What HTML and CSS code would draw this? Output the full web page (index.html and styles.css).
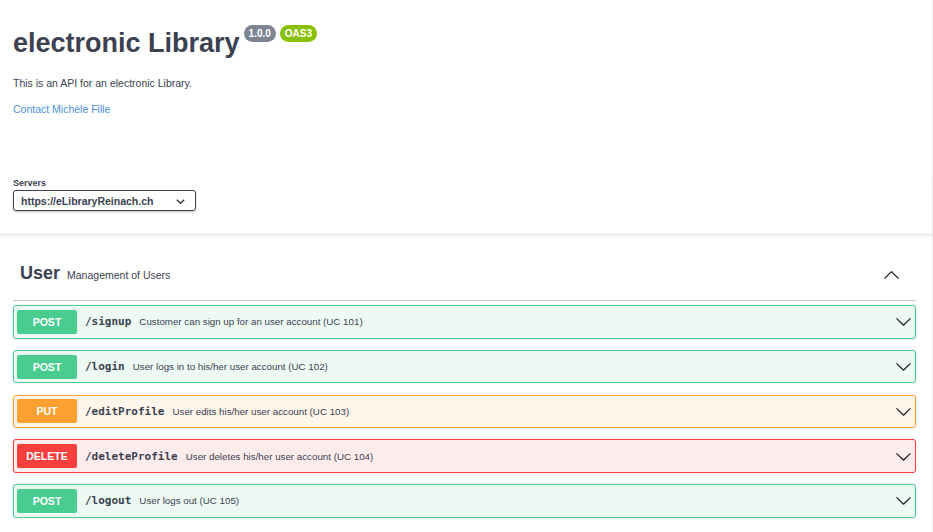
FILE: index.html
```html
<!DOCTYPE html>
<html lang="en">
<head>
<meta charset="utf-8">
<title>electronic Library</title>
<link rel="stylesheet" href="styles.css">
</head>
<body>
<div class="page">
  <div class="wrapper info">
    <h2 class="title">electronic Library<span class="badges"><span class="badge version">1.0.0</span><span class="badge oas">OAS3</span></span></h2>
    <p class="desc">This is an API for an electronic Library.</p>
    <a class="contact" href="#">Contact Michèle Fille</a>
  </div>
  <div class="scheme">
    <div class="wrapper">
      <div class="servers-label">Servers</div>
      <div class="select">
        <span>https://eLibraryReinach.ch</span>
        <svg class="sel-arrow" viewBox="0 0 9 5" width="9" height="5"><polyline points="0.8,0.8 4.5,4.2 8.2,0.8" fill="none" stroke="#333" stroke-width="1.4"/></svg>
      </div>
    </div>
  </div>
  <div class="wrapper">
    <div class="tag">
      <div class="tag-title"><span class="tag-name">User</span><span class="tag-desc">Management of Users</span></div>
      <svg class="tag-arrow" viewBox="0 0 20 20" width="17" height="17"><path d="M17.418 14.908c.272.268.709.268.979 0s.271-.701 0-.969l-7.908-7.83c-.27-.268-.707-.268-.979 0l-7.908 7.830c-.27.268-.27.701 0 .969.271.268.709.268.979 0L10 7.767l7.418 7.141z" fill="#222"/></svg>
    </div>
    <div class="ops">
      <div class="op post">
        <span class="method">POST</span><span class="path">/signup</span><span class="summary">Customer can sign up for an user account (UC 101)</span>
        <svg class="op-arrow" viewBox="0 0 20 20" width="17" height="17"><path d="M17.418 6.109c.272-.268.709-.268.979 0s.271.701 0 .969l-7.908 7.83c-.27.268-.707.268-.979 0l-7.908-7.83c-.27-.268-.27-.701 0-.969.271-.268.709-.268.979 0L10 13.25l7.418-7.141z" fill="#222"/></svg>
      </div>
      <div class="op post">
        <span class="method">POST</span><span class="path">/login</span><span class="summary">User logs in to his/her user account (UC 102)</span>
        <svg class="op-arrow" viewBox="0 0 20 20" width="17" height="17"><path d="M17.418 6.109c.272-.268.709-.268.979 0s.271.701 0 .969l-7.908 7.83c-.27.268-.707.268-.979 0l-7.908-7.83c-.27-.268-.27-.701 0-.969.271-.268.709-.268.979 0L10 13.25l7.418-7.141z" fill="#222"/></svg>
      </div>
      <div class="op put">
        <span class="method">PUT</span><span class="path">/editProfile</span><span class="summary">User edits his/her user account (UC 103)</span>
        <svg class="op-arrow" viewBox="0 0 20 20" width="17" height="17"><path d="M17.418 6.109c.272-.268.709-.268.979 0s.271.701 0 .969l-7.908 7.83c-.27.268-.707.268-.979 0l-7.908-7.83c-.27-.268-.27-.701 0-.969.271-.268.709-.268.979 0L10 13.25l7.418-7.141z" fill="#222"/></svg>
      </div>
      <div class="op delete">
        <span class="method">DELETE</span><span class="path">/deleteProfile</span><span class="summary">User deletes his/her user account (UC 104)</span>
        <svg class="op-arrow" viewBox="0 0 20 20" width="17" height="17"><path d="M17.418 6.109c.272-.268.709-.268.979 0s.271.701 0 .969l-7.908 7.83c-.27.268-.707.268-.979 0l-7.908-7.83c-.27-.268-.27-.701 0-.969.271-.268.709-.268.979 0L10 13.25l7.418-7.141z" fill="#222"/></svg>
      </div>
      <div class="op post">
        <span class="method">POST</span><span class="path">/logout</span><span class="summary">User logs out (UC 105)</span>
        <svg class="op-arrow" viewBox="0 0 20 20" width="17" height="17"><path d="M17.418 6.109c.272-.268.709-.268.979 0s.271.701 0 .969l-7.908 7.83c-.27.268-.707.268-.979 0l-7.908-7.830c-.27-.268-.27-.701 0-.969.271-.268.709-.268.979 0L10 13.25l7.418-7.141z" fill="#222"/></svg>
      </div>
    </div>
  </div>
</div>
</body>
</html>
```
FILE: styles.css
```css
html, body {
  margin: 0;
  padding: 0;
  background: #fff;
}
body {
  font-family: "Liberation Sans", Arial, sans-serif;
  color: #3b4151;
  overflow: hidden;
}
.page {
  width: 932px;
  height: 532px;
  border-right: 1px solid #ececec;
  box-sizing: content-box;
}
.wrapper {
  padding: 0 16px 0 13px;
}
.info {
  padding-top: 28px;
}
.title {
  margin: 0;
  font-size: 27px;
  line-height: 31px;
  font-weight: 700;
  color: #3b4151;
}
.badges {
  display: inline-flex;
  gap: 4px;
  vertical-align: top;
  margin-left: 4px;
  position: relative;
  top: -3px;
}
.badge {
  display: inline-block;
  font-size: 10px;
  line-height: 13px;
  font-weight: 700;
  color: #fff;
  padding: 2px 5px;
  border-radius: 40px;
}
.version { background: #7d8492; }
.oas { background: #89bf04; }
.desc {
  margin: 17px 0 0;
  font-size: 10.5px;
  line-height: 15px;
}
.contact {
  display: block;
  margin-top: 11px;
  font-size: 10.5px;
  line-height: 15px;
  color: #4990e2;
  text-decoration: none;
}
.scheme {
  margin-top: 60px;
  padding-bottom: 23px;
  border-bottom: 1px solid #e4e4e4;
  box-shadow: 0 1px 2px rgba(0,0,0,0.06);
}
.servers-label {
  font-size: 9px;
  line-height: 12px;
  font-weight: 700;
  color: #3b4151;
}
.select {
  margin-top: 1px;
  width: 183px;
  height: 21px;
  box-sizing: border-box;
  border: 1.5px solid #41444e;
  border-radius: 3px;
  box-shadow: 0 1px 2px 0 rgba(0,0,0,0.25);
  display: flex;
  align-items: center;
  justify-content: space-between;
  padding: 0 10px 0 7px;
  font-size: 10.5px;
  font-weight: 700;
  color: #3b4151;
}
.sel-arrow { margin-top: 1px; }
.tag {
  margin-top: 15px;
  height: 46px;
  border-bottom: 1px solid #c4c6cb;
  display: flex;
  align-items: center;
  justify-content: space-between;
  padding: 0 16px 4px 7px;
}
.tag-name {
  font-size: 18px;
  font-weight: 700;
  margin-right: 7px;
}
.tag-desc {
  font-size: 10.5px;
}
.tag-arrow { margin-top: 2px; }
.ops {
  margin-top: 4px;
  display: flex;
  flex-direction: column;
  gap: 11.25px;
}
.op {
  display: flex;
  align-items: center;
  height: 33.5px;
  box-sizing: border-box;
  border: 1px solid;
  border-radius: 3px;
  padding: 0 3px 0 3px;
  box-shadow: 0 0 2px rgba(0,0,0,0.12);
}
.op.post { background: #edfaf4; border-color: #49cc90; }
.op.put { background: #fff5ea; border-color: #fca130; }
.op.delete { background: #feecec; border-color: #f93e3e; }
.method {
  width: 60px;
  height: 24px;
  border-radius: 2px;
  display: flex;
  align-items: center;
  justify-content: center;
  color: #fff;
  font-size: 10.5px;
  font-weight: 700;
  flex: none;
}
.post .method { background: #49cc90; }
.put .method { background: #fca130; }
.delete .method { background: #f93e3e; }
.path {
  font-family: "DejaVu Sans Mono", "Liberation Mono", monospace;
  font-weight: 700;
  font-size: 11px;
  margin-left: 8px;
  color: #3b4151;
}
.summary {
  font-size: 9.75px;
  margin-left: 8px;
  color: #3b4151;
  flex: 1;
}
.op-arrow { flex: none; }
```
